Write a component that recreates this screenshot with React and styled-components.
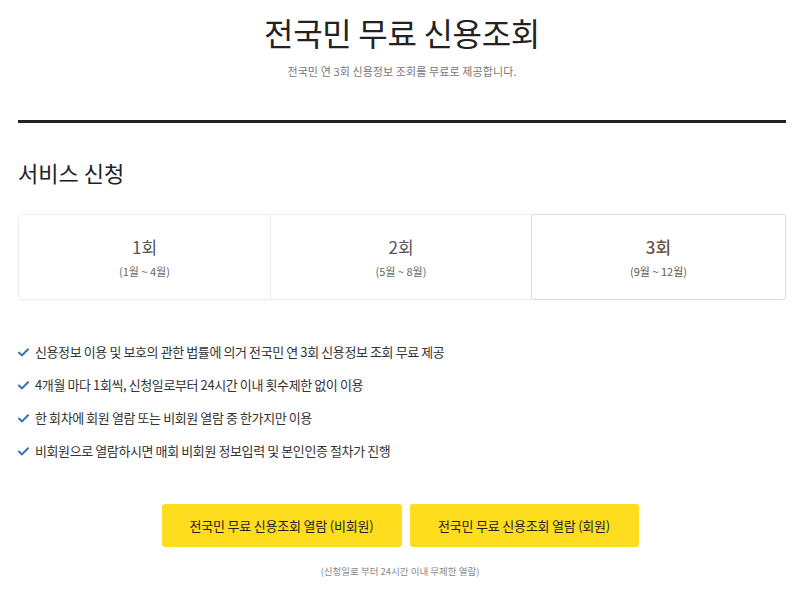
import React from "react";
import styled, { createGlobalStyle } from "styled-components";

const Global = createGlobalStyle`
  html, body { margin: 0; padding: 0; background: #fff; }
  body { font-family: "Noto Sans CJK KR", "Noto Sans", sans-serif; color: #222; }
  * { box-sizing: border-box; }
`;

const Page = styled.div`
  width: 800px;
  padding: 0 14px 0 18px;
`;

const Header = styled.header`
  display: flex;
  flex-direction: column;
  align-items: center;
  padding-top: 8px;
  padding-bottom: 41px;
  border-bottom: 3px solid #222;
`;

const Title = styled.h1`
  margin: 0;
  font-size: 32px;
  font-weight: 400;
  line-height: 48px;
  letter-spacing: -0.3px;
  color: #222;
`;

const Subtitle = styled.p`
  margin: 7px 0 0;
  font-size: 11px;
  line-height: 16px;
  color: #777;
  letter-spacing: 0.1px;
`;

const SectionTitle = styled.h2`
  margin: 34px 0 0;
  font-size: 22px;
  font-weight: 400;
  line-height: 30px;
  color: #222;
`;

const Rounds = styled.div`
  margin-top: 27px;
  display: grid;
  grid-template-columns: 253px 261px 254px;
  height: 86px;
`;

const Round = styled.div`
  display: flex;
  flex-direction: column;
  align-items: center;
  justify-content: center;
  border: 1px solid ${(p) => (p.$active ? "#dcdcdc" : "#efefef")};
  border-radius: ${(p) => (p.$first ? "3px 0 0 3px" : p.$active ? "3px" : "0")};
  ${(p) => (!p.$first && !p.$active ? "border-left: none;" : "")}
  ${(p) => (p.$active ? "margin-left: -1px;" : "")}
  box-shadow: ${(p) => (p.$first ? "0 1px 2px rgba(0,0,0,0.04)" : "none")};
`;

const RoundName = styled.div`
  font-size: 17px;
  line-height: 24px;
  color: ${(p) => (p.$active ? "#6b5446" : "#555")};
  font-weight: ${(p) => (p.$active ? 500 : 400)};
`;

const RoundRange = styled.div`
  margin-top: 4px;
  font-size: 11px;
  line-height: 16px;
  color: ${(p) => (p.$active ? "#6b5446" : "#666")};
`;

const List = styled.ul`
  list-style: none;
  margin: 42px 0 0;
  padding: 0;
  display: flex;
  flex-direction: column;
  gap: 13px;
`;

const Item = styled.li`
  display: flex;
  align-items: center;
  gap: 6px;
  font-size: 13px;
  line-height: 20px;
  color: #333;
  letter-spacing: -0.4px;
`;

const Buttons = styled.div`
  margin-top: 43px;
  display: flex;
  justify-content: center;
  gap: 8px;
  padding-right: 4px;
`;

const Button = styled.button`
  width: ${(p) => p.$w}px;
  height: 43px;
  border: none;
  border-radius: 3px;
  background: #fedd1f;
  font-family: inherit;
  font-size: 13px;
  letter-spacing: -0.2px;
  color: #222;
  cursor: pointer;
`;

const Note = styled.p`
  margin: 17px 0 0;
  text-align: center;
  font-size: 9.5px;
  line-height: 14px;
  color: #888;
  padding-right: 4px;
`;

const Check = () => (
  <svg width="11" height="9" viewBox="0 0 11 9">
    <path d="M1 4.6 L4 7.4 L10 1.2" fill="none" stroke="#3a6fb5" strokeWidth="2" strokeLinecap="round" strokeLinejoin="round" />
  </svg>
);

const items = [
  "신용정보 이용 및 보호의 관한 법률에 의거 전국민 연 3회 신용정보 조회 무료 제공",
  "4개월 마다 1회씩, 신청일로부터 24시간 이내 횟수제한 없이 이용",
  "한 회차에 회원 열람 또는 비회원 열람 중 한가지만 이용",
  "비회원으로 열람하시면 매회 비회원 정보입력 및 본인인증 절차가 진행",
];

const rounds = [
  { name: "1회", range: "(1월 ~ 4월)" },
  { name: "2회", range: "(5월 ~ 8월)" },
  { name: "3회", range: "(9월 ~ 12월)", active: true },
];

export default function App() {
  return (
    <Page>
      <Global />
      <Header>
        <Title>전국민 무료 신용조회</Title>
        <Subtitle>전국민 연 3회 신용정보 조회를 무료로 제공합니다.</Subtitle>
      </Header>
      <SectionTitle>서비스 신청</SectionTitle>
      <Rounds>
        {rounds.map((r, i) => (
          <Round key={r.name} $active={r.active} $first={i === 0}>
            <RoundName $active={r.active}>{r.name}</RoundName>
            <RoundRange $active={r.active}>{r.range}</RoundRange>
          </Round>
        ))}
      </Rounds>
      <List>
        {items.map((t) => (
          <Item key={t}>
            <Check />
            {t}
          </Item>
        ))}
      </List>
      <Buttons>
        <Button $w={240}>전국민 무료 신용조회 열람 (비회원)</Button>
        <Button $w={229}>전국민 무료 신용조회 열람 (회원)</Button>
      </Buttons>
      <Note>(신청일로 부터 24시간 이내 무제한 열람)</Note>
    </Page>
  );
}
